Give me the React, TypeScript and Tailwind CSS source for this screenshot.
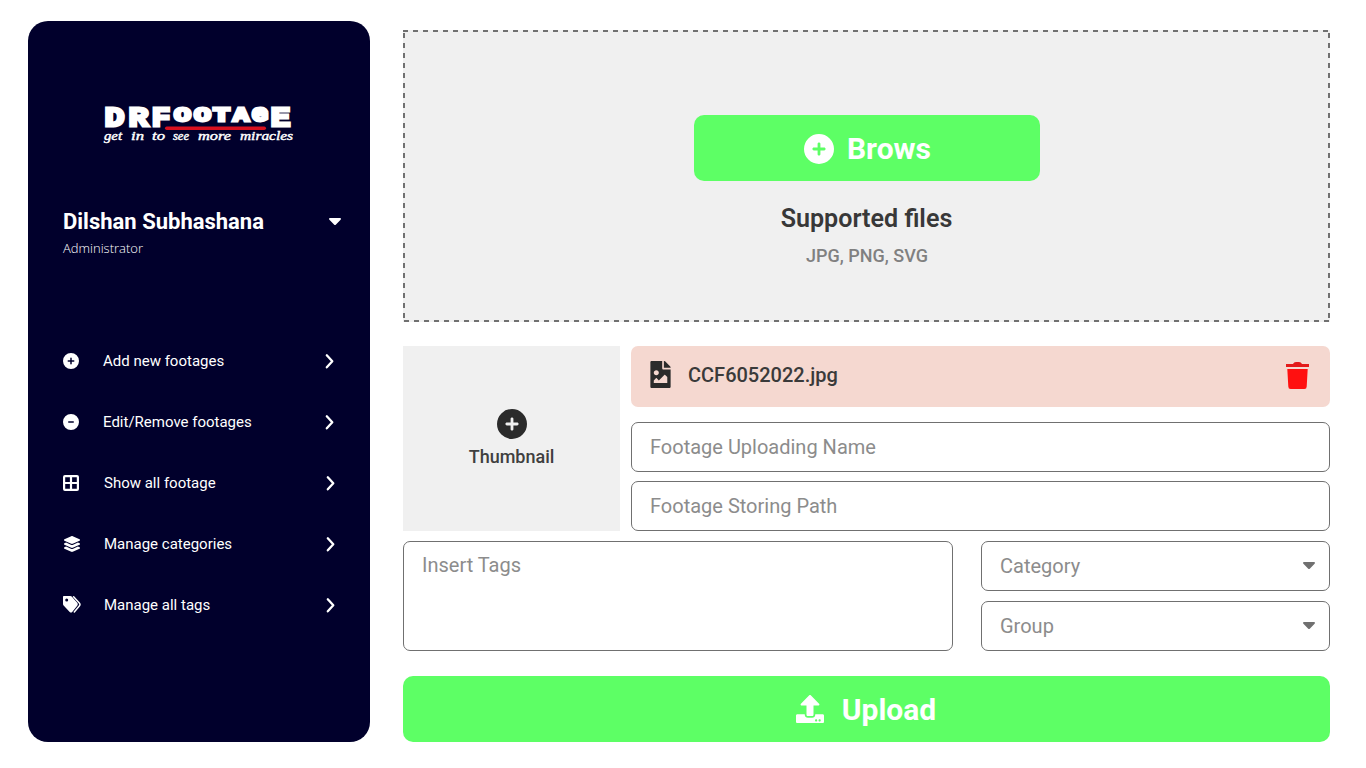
import React from "react";
import { FaUpload, FaFileImage as FileImage5 } from "react-icons/fa";
import { FaCircleMinus, FaCirclePlus, FaLayerGroup } from "react-icons/fa6";

const wordmark = [
  { ch: "D", x: 4.5, w: 20, big: true },
  { ch: "R", x: 28.5, w: 20, big: true },
  { ch: "F", x: 51.5, w: 19, big: true },
  { ch: "O", x: 74, w: 17, big: false },
  { ch: "O", x: 94, w: 17, big: false },
  { ch: "T", x: 113, w: 17, big: false },
  { ch: "A", x: 133, w: 16, big: false },
  { ch: "G", x: 152, w: 16, big: false },
  { ch: "E", x: 170.5, w: 20, big: true },
];

const tagline = [
  { word: "get", x: 4, w: 18 },
  { word: "in", x: 31, w: 13 },
  { word: "to", x: 52, w: 13 },
  { word: "see", x: 73, w: 16 },
  { word: "more", x: 98, w: 33 },
  { word: "miracles", x: 140, w: 53 },
];

function Logo() {
  return (
    <svg width="200" height="52" viewBox="0 0 200 52" className="block">
      <g fill="#fff" stroke="#fff" strokeWidth="2.800" strokeLinejoin="miter" fontFamily="Liberation Mono" fontWeight="700">
        {wordmark.map((l) => (
          <text key={l.x} x={l.x} y={l.big ? 25.5 : 20.5} fontSize={l.big ? 28.5 : 21} textLength={l.w} lengthAdjust="spacingAndGlyphs">
            {l.ch}
          </text>
        ))}
      </g>
      <rect x="65" y="26.500" width="101" height="3.500" rx="1.700" fill="#d9101f" />
      <g fill="#fff" stroke="#fff" strokeWidth="0.400" fontFamily="Liberation Serif" fontStyle="italic" fontSize="12">
        {tagline.map((t) => (
          <text key={t.x} x={t.x} y="40" textLength={t.w} lengthAdjust="spacingAndGlyphs">
            {t.word}
          </text>
        ))}
      </g>
    </svg>
  );
}

function Chevron() {
  return (
    <svg width="10" height="16" viewBox="0 0 10 16" fill="none" stroke="#fff" strokeWidth="2.300" strokeLinecap="round" strokeLinejoin="round">
      <path d="M1.800 2.300 7.300 8.300 1.800 14.300" />
    </svg>
  );
}

function Caret() {
  return (
    <svg width="12" height="8" viewBox="0 0 12 8" fill="currentColor">
      <path d="M1 0h10c1 0 1.300 1 .6 1.700L7 6.600q-1 1-2 0L.4 1.700C-.3 1 0 0 1 0Z" />
    </svg>
  );
}

function GridIcon() {
  return (
    <svg width="16" height="16" viewBox="0 0 16 16" fill="#fff">
      <path fillRule="evenodd" d="M2 0h12a2 2 0 0 1 2 2v12a2 2 0 0 1-2 2H2a2 2 0 0 1-2-2V2a2 2 0 0 1 2-2ZM2.200 2.200v4.700h4.700V2.200Zm6.900 0v4.700h4.700V2.200ZM2.200 9.100v4.700h4.700V9.100Zm6.900 0v4.700h4.700V9.100Z" />
    </svg>
  );
}

function TagsIcon() {
  return (
    <svg width="18" height="17" viewBox="0 0 18 17">
      <path fill="#fff" fillRule="evenodd" d="M1 0h6.300c.6 0 1 .2 1.400.6l5.500 6.200c.8.900.8 2 0 2.900l-5 6.200c-.7.800-1.700.8-2.500 0L.6 9.600C.2 9.200 0 8.700 0 8.100V1c0-.6.4-1 1-1Zm2.700 2.400a1.500 1.500 0 1 0 0 3 1.500 1.500 0 0 0 0-3Z" />
      <path fill="none" stroke="#fff" strokeWidth="1.500" strokeLinecap="round" d="m10.600.800 5.700 6.100c.9 1 .9 2 0 3.100l-5 6" />
    </svg>
  );
}

function TrashIcon() {
  return (
    <svg width="23" height="27" viewBox="0 0 23 27">
      <path fill="#e31b1b" d="M0 2h7c.8-1.300 1.500-2 3-2h3c1.500 0 2.200.7 3 2h7v3H0Z" />
      <path fill="#ff1010" d="M1.300 7h20.400l-1 17.400A2.600 2.600 0 0 1 18 27H5a2.600 2.600 0 0 1-2.700-2.600Z" />
    </svg>
  );
}

function DashedFrame() {
  return (
    <svg width="927" height="292" className="absolute inset-0" stroke="#707070" strokeWidth="2" strokeDasharray="5 5">
      <path d="M0 1H927M1 3V292M926 3V292M1 291H927" />
    </svg>
  );
}

const menu = [
  { label: "Add new footages", icon: <FaCirclePlus size={16} />, shift: "pl-0", end: "pr-[2px]" },
  { label: "Edit/Remove footages", icon: <FaCircleMinus size={16} />, shift: "pl-0", end: "pr-[2px]" },
  { label: "Show all footage", icon: <GridIcon />, shift: "pl-px", end: "pr-px" },
  { label: "Manage categories", icon: <FaLayerGroup size={18} />, shift: "pl-px", end: "pr-px" },
  { label: "Manage all tags", icon: <TagsIcon />, shift: "pl-px", end: "pr-px" },
];

function Sidebar() {
  return (
    <aside className="flex h-[721px] w-[342px] shrink-0 flex-col rounded-[20px] bg-[#01002c] text-white">
      <div className="mt-[79px] ml-[72px] h-[52px]">
        <Logo />
      </div>
      <div className="mt-[55px] ml-[35px] flex h-[30px] w-[278px] items-center justify-between">
        <span className="text-[22px] leading-[30px] font-bold whitespace-nowrap">Dilshan Subhashana</span>
        <Caret />
      </div>
      <div className="mt-px ml-[35px] h-5 font-['Open_Sans'] text-[13px] leading-5 font-light">Administrator</div>
      <nav className="mt-[72px] ml-[35px] flex w-[274px] flex-col">
        {menu.map((m) => (
          <div key={m.label} className={`flex h-[61px] items-center ${m.end}`}>
            <span className="flex w-10 items-center">{m.icon}</span>
            <span className={`flex-1 text-[15px] leading-5 ${m.shift}`}>{m.label}</span>
            <Chevron />
          </div>
        ))}
      </nav>
    </aside>
  );
}

function Field({ label, caret }: { label: string; caret?: boolean }) {
  return (
    <div className="flex h-[50px] items-center justify-between rounded-[7px] border border-[#707070] pr-[14px] pl-[18px] text-[20px] text-[#8c8c8c]">
      <span>{label}</span>
      {caret && <span className="text-[#707070]"><Caret /></span>}
    </div>
  );
}

export default function App() {
  return (
    <div className="flex h-[768px] w-[1366px] gap-[33px] overflow-hidden bg-white pt-[21px] pl-7 font-[Roboto,sans-serif]">
      <Sidebar />
      <main className="flex w-[927px] flex-col pt-[9px]">
        <section className="relative flex h-[292px] flex-col items-center bg-[#f0f0f0] pt-[85px]">
          <DashedFrame />
          <button className="flex h-[66px] w-[346px] items-center justify-center gap-[13px] rounded-[10px] bg-[#5dff65] pl-[2px] text-[30px] font-bold text-white">
            <FaCirclePlus size={30} className="mt-[2px]" />
            <span>Brows</span>
          </button>
          <h2 className="mt-[23px] text-[25.100px] leading-[30px] font-semibold text-[#383838]">Supported files</h2>
          <p className="mt-[10px] pl-px text-[18px] leading-6 font-medium text-[#808080]">JPG, PNG, SVG</p>
        </section>

        <section className="mt-6 flex h-[185px] gap-[11px]">
          <div className="flex w-[217px] flex-col items-center bg-[#f0f0f0] pt-[63px] text-[#2b2b2b]">
            <FaCirclePlus size={30} />
            <span className="mt-[6px] text-[18px] leading-6 font-medium text-[#3f3f3f]">Thumbnail</span>
          </div>
          <div className="flex flex-1 flex-col">
            <div className="mb-[15px] flex h-[61px] items-center rounded-[7px] bg-[#f5d8d0] pr-[21px] pb-[3px] pl-[19px]">
              <FileImage5 className="mb-[2px] h-[27px] w-[21px] text-[#2b2b2b]" />
              <span className="ml-[17px] flex-1 text-[20px] font-medium text-[#3a3a3a]">CCF6052022.jpg</span>
              <span className="pt-px">
                <TrashIcon />
              </span>
            </div>
            <div className="flex flex-col gap-[9px]">
              <Field label="Footage Uploading Name" />
              <Field label="Footage Storing Path" />
            </div>
          </div>
        </section>

        <section className="mt-[10px] flex gap-7">
          <div className="h-[110px] w-[550px] rounded-[7px] border border-[#707070] px-[18px] pt-[8px] text-[20px] leading-[30px] text-[#8c8c8c]">
            Insert Tags
          </div>
          <div className="flex flex-1 flex-col gap-[10px]">
            <Field label="Category" caret />
            <Field label="Group" caret />
          </div>
        </section>

        <button className="mt-[25px] flex h-[66px] items-center justify-center gap-[18px] rounded-[10px] bg-[#5dff65] pr-px text-[30px] font-bold text-white">
          <FaUpload size={28} />
          <span>Upload</span>
        </button>
      </main>
    </div>
  );
}
